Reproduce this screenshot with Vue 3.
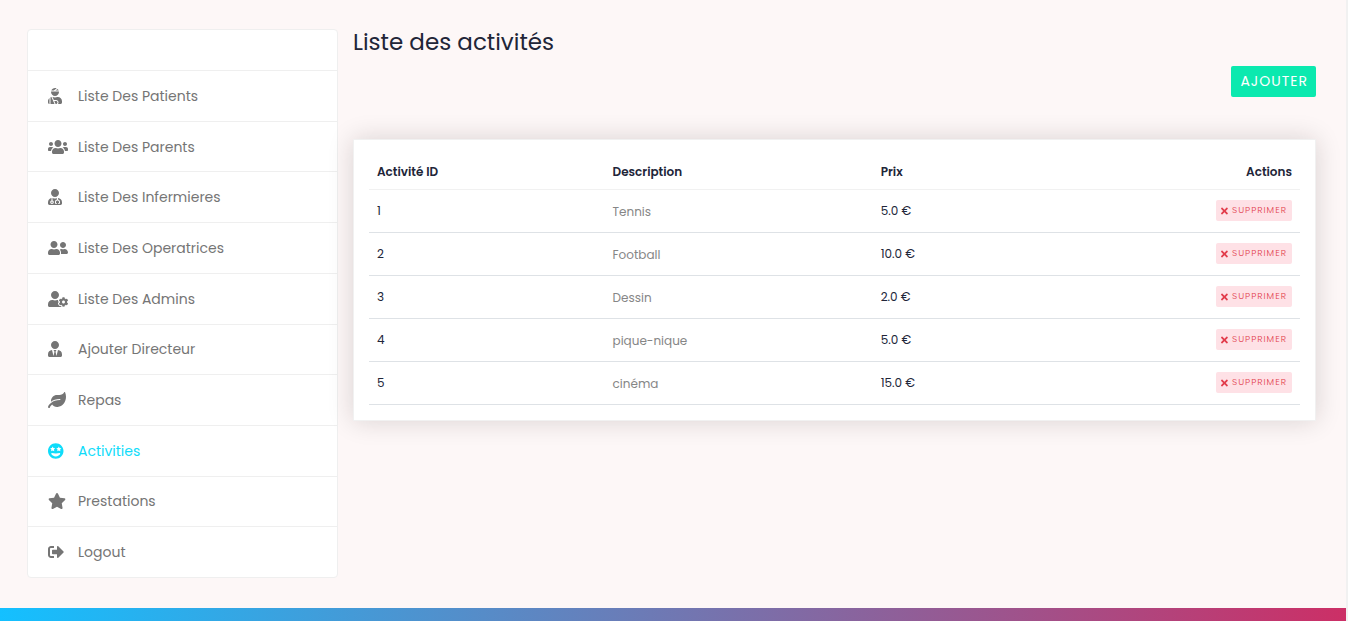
<script setup>
const icons = {
  injured: { w: 448, d: 'M277.37 11.98C261.08 4.47 243.11 0 224 0c-53.69 0-99.5 33.13-118.51 80h81.19l90.69-68.02zM342.51 80c-7.9-19.47-20.67-36.2-36.49-49.52L239.99 80h102.52zM224 256c70.69 0 128-57.31 128-128 0-5.48-.95-10.7-1.61-16H97.61c-.67 5.3-1.61 10.52-1.61 16 0 70.69 57.31 128 128 128zM80 299.7V512h128.26l-98.45-221.52A132.835 132.835 0 0 0 80 299.7zM0 464c0 26.51 21.49 48 48 48V320.24C18.88 344.89 0 381.26 0 422.4V464zm256-48h-55.38l42.67 96H256c26.47 0 48-21.53 48-48s-21.53-48-48-48zm57.6-128h-16.71c-22.24 10.18-46.88 16-72.89 16s-50.65-5.82-72.89-16h-7.37l42.67 96H256c44.11 0 80 35.89 80 80 0 18.08-6.26 34.59-16.41 48H400c26.51 0 48-21.49 48-48v-41.6c0-74.23-60.17-134.4-134.4-134.4z' },
  users: { w: 640, d: 'M96 224c35.3 0 64-28.7 64-64s-28.7-64-64-64-64 28.7-64 64 28.7 64 64 64zm448 0c35.3 0 64-28.7 64-64s-28.7-64-64-64-64 28.7-64 64 28.7 64 64 64zm32 32h-64c-17.6 0-33.5 7.1-45.1 18.6 40.3 22.1 68.9 62 75.1 109.4h66c17.7 0 32-14.3 32-32v-32c0-35.3-28.7-64-64-64zm-256 0c61.9 0 112-50.1 112-112S381.9 32 320 32 208 82.1 208 144s50.1 112 112 112zm76.8 32h-8.3c-20.8 10-43.9 16-68.5 16s-47.6-6-68.5-16h-8.3C179.6 288 128 339.6 128 403.2V432c0 26.5 21.5 48 48 48h288c26.5 0 48-21.5 48-48v-28.8c0-63.6-51.6-115.2-115.2-115.2zm-223.7-13.4C161.5 263.1 145.6 256 128 256H64c-35.3 0-64 28.7-64 64v32c0 17.7 14.3 32 32 32h65.9c6.3-47.4 34.9-87.3 75.2-109.4z' },
  medic: { w: 448, d: 'M224 256c70.7 0 128-57.3 128-128S294.7 0 224 0 96 57.3 96 128s57.3 128 128 128zM104 424c0 13.3 10.7 24 24 24s24-10.7 24-24-10.7-24-24-24-24 10.7-24 24zm216-135.4v49c36.5 7.4 64 39.8 64 78.4v41.7c0 7.6-5.4 14.2-12.9 15.7l-32.2 6.4c-4.3.9-8.5-1.9-9.4-6.3l-3.1-15.7c-.9-4.3 1.9-8.6 6.3-9.4l19.3-3.9V416c0-62.8-96-65.1-96 1.9v26.7l19.3 3.9c4.3.9 7.1 5.1 6.3 9.4l-3.1 15.7c-.9 4.3-5.1 7.1-9.4 6.3l-31.2-4.2c-7.9-1.1-13.8-7.8-13.8-15.9V416c0-38.6 27.5-70.9 64-78.4v-45.2c-2.2.7-4.4 1.1-6.6 1.9-18 6.3-37.3 9.8-57.4 9.8s-39.4-3.5-57.4-9.8c-7.4-2.6-14.9-4.2-22.6-5.2v81.6c23.1 6.9 40 28.1 40 53.4 0 30.9-25.1 56-56 56s-56-25.1-56-56c0-25.3 16.9-46.5 40-53.4v-80.4C48.5 301 0 355.8 0 422.4v44.8C0 491.9 20.1 512 44.8 512h358.4c24.7 0 44.8-20.1 44.8-44.8v-44.8c0-72-56.8-130.3-128-133.8z' },
  friends: { w: 640, d: 'M192 256c61.9 0 112-50.1 112-112S253.9 32 192 32 80 82.1 80 144s50.1 112 112 112zm76.8 32h-8.3c-20.8 10-43.9 16-68.5 16s-47.6-6-68.5-16h-8.3C51.6 288 0 339.6 0 403.2V432c0 26.5 21.5 48 48 48h288c26.5 0 48-21.5 48-48v-28.8c0-63.6-51.6-115.2-115.2-115.2zM480 256c53 0 96-43 96-96s-43-96-96-96-96 43-96 96 43 96 96 96zm48 32h-3.8c-13.9 4.8-28.6 8-44.2 8s-30.3-3.2-44.2-8H432c-20.4 0-39.2 5.9-55.7 15.4 24.4 26.3 39.7 61.2 39.7 99.8v38.4c0 2.2-.5 4.3-.6 6.4H592c26.5 0 48-21.5 48-48 0-61.9-50.1-112-112-112z' },
  cog: { w: 640, d: 'M610.5 373.3c2.6-14.1 2.6-28.5 0-42.6l25.8-14.9c3-1.7 4.3-5.2 3.3-8.5-6.7-21.6-18.2-41.2-33.2-57.4-2.3-2.5-6-3.1-9-1.4l-25.8 14.9c-10.9-9.3-23.4-16.5-36.9-21.3v-29.8c0-3.4-2.4-6.4-5.7-7.1-22.3-5-45-4.8-66.2 0-3.3.7-5.7 3.7-5.7 7.1v29.8c-13.5 4.8-26 12-36.9 21.3l-25.8-14.9c-2.9-1.7-6.7-1.1-9 1.4-15 16.2-26.5 35.8-33.2 57.4-1 3.3.4 6.8 3.3 8.5l25.8 14.9c-2.6 14.1-2.6 28.5 0 42.6l-25.8 14.9c-3 1.7-4.3 5.2-3.3 8.5 6.7 21.6 18.2 41.1 33.2 57.4 2.3 2.5 6 3.1 9 1.4l25.8-14.9c10.9 9.3 23.4 16.5 36.9 21.3v29.8c0 3.4 2.4 6.4 5.7 7.1 22.3 5 45 4.8 66.2 0 3.3-.7 5.7-3.7 5.7-7.1v-29.8c13.5-4.8 26-12 36.9-21.3l25.8 14.9c2.9 1.7 6.7 1.1 9-1.4 15-16.2 26.5-35.8 33.2-57.4 1-3.3-.4-6.8-3.3-8.5l-25.8-14.9zM496 400.5c-26.8 0-48.5-21.8-48.5-48.5s21.8-48.5 48.5-48.5 48.5 21.8 48.5 48.5-21.7 48.5-48.5 48.5zM224 256c70.7 0 128-57.3 128-128S294.7 0 224 0 96 57.3 96 128s57.3 128 128 128zm201.2 226.5c-2.3-1.2-4.6-2.6-6.8-3.9l-7.9 4.6c-6 3.4-12.8 5.3-19.6 5.3-10.9 0-21.4-4.6-28.9-12.6-18.3-19.8-32.3-43.9-40.2-69.6-5.5-17.7 1.9-36.4 17.9-45.7l7.9-4.6c-.1-2.6-.1-5.2 0-7.8l-7.9-4.6c-16-9.2-23.4-28-17.9-45.7.9-2.9 2.2-5.8 3.2-8.7-3.8-.3-7.5-1.2-11.4-1.2h-16.7c-22.2 10.2-46.9 16-72.9 16s-50.6-5.8-72.9-16h-16.7C60.2 288 0 348.2 0 422.4V464c0 26.5 21.5 48 48 48h352c10.1 0 19.5-3.2 27.2-8.5-1.2-3.8-2-7.7-2-11.8v-9.2z' },
  tie: { w: 448, d: 'M224 256c70.7 0 128-57.3 128-128S294.7 0 224 0 96 57.3 96 128s57.3 128 128 128zm95.8 32.6L272 480l-32-136 32-56h-96l32 56-32 136-47.8-191.4C56.9 292 0 350.3 0 422.4V464c0 26.5 21.5 48 48 48h352c26.5 0 48-21.5 48-48v-41.6c0-72.1-56.9-130.4-128.2-133.8z' },
  leaf: { w: 576, d: 'M546.2 9.7c-5.6-12.5-21.6-13-28.3-1.2C486.9 62.4 431.4 96 368 96h-80C182 96 96 182 96 288c0 7 .8 13.7 1.5 20.5C161.3 262.8 253.4 224 384 224c8.8 0 16 7.2 16 16s-7.2 16-16 16C132.6 256 26 410.1 2.4 468c-6.6 16.3 1.2 34.9 17.5 41.6 16.4 6.8 35-1.1 41.8-17.3 1.5-3.6 20.9-47.9 71.9-90.6 32.4 43.9 94 85.8 174.9 77.2C465.5 467.5 576 326.7 576 154.3c0-50.2-10.8-102.2-29.8-144.6z' },
  grin: { w: 496, d: 'M248 8C111 8 0 119 0 256s111 248 248 248 248-111 248-248S385 8 248 8zM150 108l25 51 57 8-41 40 10 57-51-27-51 27 10-57-41-40 57-8zM346 108l25 51 57 8-41 40 10 57-51-27-51 27 10-57-41-40 57-8zM248 432c-60.6 0-134.5-38.3-143.8-93.3-2-11.8 9.3-21.6 20.7-17.9C155.1 330.5 200 336 248 336s92.9-5.5 123.1-15.2c11.5-3.7 22.6 6.2 20.7 17.9-9.3 55-83.2 93.3-143.8 93.3z' },
  star: { w: 576, d: 'M259.3 17.8L194 150.2 47.9 171.5c-26.2 3.8-36.7 36.1-17.7 54.6l105.7 103-25 145.5c-4.5 26.3 23.2 46 46.4 33.7L288 439.6l130.7 68.7c23.2 12.2 50.9-7.4 46.4-33.7l-25-145.5 105.7-103c19-18.5 8.5-50.8-17.7-54.6L382 150.2 316.7 17.8c-11.7-23.6-45.6-23.9-57.4 0z' },
  logout: { w: 512, d: 'M497 273L329 441c-15 15-41 4.5-41-17v-96H152c-13.3 0-24-10.7-24-24v-96c0-13.3 10.7-24 24-24h136V88c0-21.4 25.9-32 41-17l168 168c9.3 9.4 9.3 24.6 0 34zM192 436v-40c0-6.6-5.4-12-12-12H96c-17.7 0-32-14.3-32-32V160c0-17.7 14.3-32 32-32h84c6.6 0 12-5.4 12-12V76c0-6.6-5.4-12-12-12H96c-53 0-96 43-96 96v192c0 53 43 96 96 96h84c6.6 0 12-5.4 12-12z' },
}

const menu = [
  { label: 'Liste Des Patients', icon: icons.injured },
  { label: 'Liste Des Parents', icon: icons.users },
  { label: 'Liste Des Infermieres', icon: icons.medic },
  { label: 'Liste Des Operatrices', icon: icons.friends },
  { label: 'Liste Des Admins', icon: icons.cog },
  { label: 'Ajouter Directeur', icon: icons.tie },
  { label: 'Repas', icon: icons.leaf },
  { label: 'Activities', icon: icons.grin, active: true },
  { label: 'Prestations', icon: icons.star },
  { label: 'Logout', icon: icons.logout },
]

const activities = [
  { id: 1, description: 'Tennis', price: '5.0 €' },
  { id: 2, description: 'Football', price: '10.0 €' },
  { id: 3, description: 'Dessin', price: '2.0 €' },
  { id: 4, description: 'pique-nique', price: '5.0 €' },
  { id: 5, description: 'cinéma', price: '15.0 €' },
]
</script>

<template>
  <div class="page">
    <div class="layout">
      <nav class="sidebar">
        <div class="sidebar-head"></div>
        <a v-for="item in menu" :key="item.label" href="#" class="item" :class="{ active: item.active }">
          <span class="item-icon">
            <svg :viewBox="`0 0 ${item.icon.w} 512`" height="16" aria-hidden="true">
              <path fill-rule="evenodd" :d="item.icon.d" />
            </svg>
          </span>
          <span>{{ item.label }}</span>
        </a>
      </nav>

      <main class="content">
        <h1>Liste des activités</h1>
        <div class="toolbar">
          <button type="button" class="add">AJOUTER</button>
        </div>
        <section class="card">
          <table>
            <thead>
              <tr>
                <th class="col-id">Activité ID</th>
                <th class="col-desc">Description</th>
                <th>Prix</th>
                <th class="col-actions">Actions</th>
              </tr>
            </thead>
            <tbody>
              <tr v-for="row in activities" :key="row.id">
                <td>{{ row.id }}</td>
                <td class="desc">{{ row.description }}</td>
                <td>{{ row.price }}</td>
                <td class="col-actions">
                  <button type="button" class="remove">
                    <svg viewBox="0 0 352 512" height="10" aria-hidden="true">
                      <path d="M242.72 256l100.07-100.07c12.28-12.28 12.28-32.19 0-44.48l-22.24-22.24c-12.28-12.28-32.19-12.28-44.48 0L176 189.28 75.93 89.21c-12.28-12.28-32.19-12.28-44.48 0L9.21 111.45c-12.28 12.28-12.28 32.19 0 44.48L109.28 256 9.21 356.07c-12.28 12.28-12.28 32.19 0 44.48l22.24 22.24c12.28 12.28 32.2 12.28 44.48 0L176 322.72l100.07 100.07c12.28 12.28 32.2 12.28 44.48 0l22.24-22.24c12.28-12.28 12.28-32.19 0-44.48L242.72 256z" />
                    </svg>
                    <span>SUPPRIMER</span>
                  </button>
                </td>
              </tr>
            </tbody>
          </table>
        </section>
      </main>
    </div>
    <footer class="footer"></footer>
  </div>
</template>

<style>
body {
  margin: 0;
}
</style>

<style scoped>
.page {
  box-sizing: border-box;
  min-height: 100vh;
  display: flex;
  flex-direction: column;
  background: #fdf7f7;
  border-right: 2px solid #f1f1f1;
  font-family: Poppins, Inter, "Open Sans", sans-serif;
  color: #212538;
}

.page * {
  box-sizing: border-box;
}

.layout {
  flex: 1;
  display: flex;
  gap: 15px;
  padding: 29px 30px 30px 27px;
}

.sidebar {
  flex: 0 0 311px;
  display: flex;
  flex-direction: column;
  background: #fff;
  border: 1px solid #efefef;
  border-radius: 4px;
}

.sidebar-head {
  height: 40px;
}

.item {
  flex: 1;
  display: flex;
  align-items: center;
  padding: 0 20px;
  border-top: 1px solid #efefef;
  font-size: 14px;
  line-height: 24px;
  color: #757575;
  text-decoration: none;
}

.item.active {
  color: #0fdcfa;
}

.item-icon {
  flex: 0 0 30px;
  display: flex;
}

svg {
  display: block;
  fill: currentColor;
}

.content {
  flex: 1;
  min-width: 0;
}

h1 {
  margin: 0;
  font-size: 23px;
  line-height: 27px;
  font-weight: 400;
}

.toolbar {
  display: flex;
  justify-content: flex-end;
  margin: 10px 0 42px;
}

.add {
  height: 31px;
  padding: 0 8px 0 9px;
  border: 0;
  border-radius: 2px;
  background: #0be9af;
  color: #fff;
  font-family: inherit;
  font-size: 14px;
  letter-spacing: 1px;
}

.card {
  padding: 15px;
  background: #fff;
  border: 1px solid #f1f1f1;
  box-shadow: 0 0 24px rgba(30, 20, 20, 0.16);
}

table {
  width: 100%;
  border-collapse: collapse;
  table-layout: fixed;
  font-size: 12px;
  line-height: 18px;
}

th {
  height: 34px;
  padding: 0 8px;
  text-align: left;
  font-weight: 600;
  border-bottom: 1px solid #f1f1f1;
}

td {
  height: 43px;
  padding: 0 8px;
  border-bottom: 1px solid #dee2e6;
}

.col-id {
  width: 25.3%;
}

.col-desc {
  width: 28.8%;
}

.desc {
  padding-top: 2px;
  color: #868686;
}

th.col-actions,
td.col-actions {
  text-align: right;
}

.remove {
  display: inline-flex;
  align-items: center;
  gap: 4px;
  height: 21px;
  padding: 0 5px;
  border: 0;
  border-radius: 2px;
  background: #fee1e6;
  color: #e23c4b;
  font-family: inherit;
  font-size: 9px;
  font-weight: 300;
  letter-spacing: 1px;
  vertical-align: middle;
}

.footer {
  height: 13px;
  background: linear-gradient(to right, #14c0ff, #cc2f66);
}
</style>
